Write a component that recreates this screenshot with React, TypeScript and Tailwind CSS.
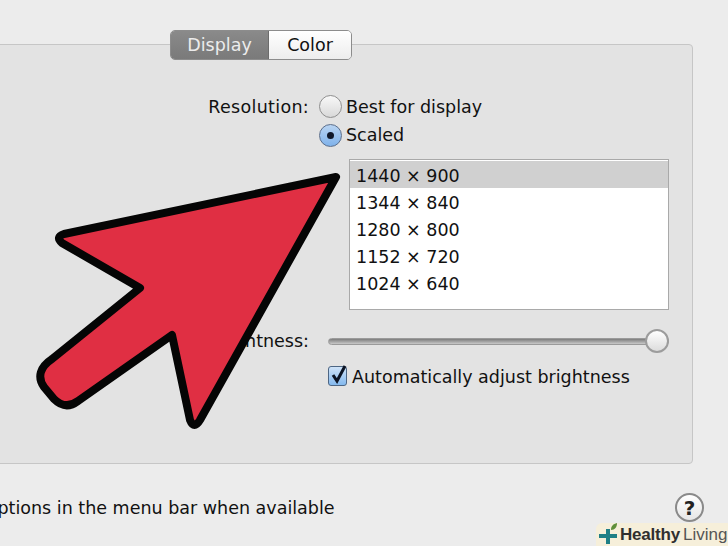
import React from 'react';

const resolutions = ['1440 × 900', '1344 × 840', '1280 × 800', '1152 × 720', '1024 × 640'];

const Radio = ({ checked }: { checked?: boolean }) => (
  <span
    className={`w-[23px] h-[23px] rounded-full flex items-center justify-center border ${
      checked
        ? 'border-[#5c6f8c] bg-gradient-to-b from-[#b9d4f2] to-[#7fb2ea]'
        : 'border-[#8f8f8f] bg-gradient-to-b from-[#f8f8f8] to-[#d9d9d9]'
    }`}
  >
    {checked && <span className="w-[7px] h-[7px] rounded-full bg-[#10182a]" />}
  </span>
);

const Arrow = () => (
  <svg className="absolute left-0 top-0 pointer-events-none" width="728" height="546" viewBox="0 0 728 546">
    <path
      d="M336 177 L64 234 Q55 237 62 243 L140 288 L52 359 C40 367 37 377 44 387 L54 399 C62 407 70 407 78 401 L172 335 L190 420 Q194 430 200 420 Z"
      fill="#e02f43"
      stroke="#050505"
      strokeWidth="8"
      strokeLinejoin="round"
    />
  </svg>
);

const Badge = () => (
  <div className="absolute right-0 bottom-0 w-[132px] h-[23px] bg-[#f6efda] rounded-tl-[6px] flex items-center pl-[2px] text-[17px] leading-[23px] whitespace-nowrap font-['Liberation_Sans',sans-serif]">
    <svg width="21" height="22" viewBox="0 0 21 22" className="shrink-0 -mt-[2px]">
      <path d="M8 6h4v5h7v4h-7v6H8v-6H1v-4h7z" fill="#1f7f86" />
      <path d="M13 7c0-4 2-6 6-7 0 4-2 7-6 7z" fill="#5f8f3a" />
    </svg>
    <span className="ml-[1px] font-bold text-[#2f2f2f] tracking-[-0.2px]">Healthy</span>
    <span className="ml-[3px] text-[#555555]">Living</span>
  </div>
);

export default function App() {
  return (
    <div className="relative w-[728px] h-[546px] overflow-hidden bg-[#ececec] text-[#111111] text-[17.5px] leading-[24px] font-['DejaVu_Sans',sans-serif]">
      <div className="pt-[44px] -ml-[10px]">
        {/* Panel */}
        <div className="w-[703px] h-[420px] bg-[#e3e3e3] border border-[#c6c6c6] rounded-[4px]">
          {/* Tabs */}
          <div className="-mt-[15px] ml-[179px] w-[182px] h-[30px] flex rounded-[5px] border border-[#8c8c8c] overflow-hidden">
            <div className="w-[98px] flex items-center justify-center bg-gradient-to-b from-[#8a8a8a] to-[#7a7a7a] text-[#ececec] border-r border-[#6c6c6c]">
              Display
            </div>
            <div className="flex-1 flex items-center justify-center bg-gradient-to-b from-[#ffffff] to-[#ededed]">
              Color
            </div>
          </div>

          {/* Resolution */}
          <div className="mt-[34px] grid grid-cols-[318px_1fr] gap-y-[5px] items-center">
            <div className="text-right h-[24px] leading-[26px] tracking-[0.3px]">Resolution:</div>
            <div className="flex items-center gap-[4px] pl-[10px]">
              <Radio />
              <span className="h-[24px] leading-[26px]">Best for display</span>
            </div>
            <div />
            <div className="flex items-center gap-[4px] pl-[10px]">
              <Radio checked />
              <span>Scaled</span>
            </div>
          </div>

          {/* List */}
          <div className="mt-[12px] ml-[358px] w-[320px] h-[151px] bg-white border border-[#a9a9a9] pt-[1px]">
            {resolutions.map((r, i) => (
              <div key={r} className={`h-[27px] pl-[6px] leading-[30px] ${i === 0 ? 'bg-[#d0d0d0]' : ''}`}>
                {r}
              </div>
            ))}
          </div>

          {/* Brightness */}
          <div className="mt-[18px] flex items-center">
            <div className="w-[318px] text-right">Brightness:</div>
            <div className="relative ml-[19px] w-[341px] h-[26px] flex items-center">
              <div className="w-full h-[7px] rounded-full bg-gradient-to-b from-[#7d7d7d] to-[#c9c9c9] border border-[#9a9a9a]" />
              <div className="absolute right-0 top-[1px] w-[24px] h-[24px] rounded-full border-2 border-[#9c9c9c] bg-gradient-to-b from-[#ffffff] to-[#dcdcdc]" />
            </div>
          </div>

          {/* Auto brightness */}
          <div className="mt-[8px] ml-[337px] flex items-center gap-[5px]">
            <span className="relative w-[19px] h-[20px] rounded-[3px] border border-[#4d6684] bg-gradient-to-b from-[#cfe3f8] to-[#84b9ee]">
              <svg className="absolute -left-[1px] -top-[4px]" width="22" height="24" viewBox="0 0 22 24">
                <path d="M5 12l4 6 8-15" fill="none" stroke="#0c1424" strokeWidth="3" />
              </svg>
            </span>
            <span className="mt-[3px]">Automatically adjust brightness</span>
          </div>
        </div>

        {/* Footer */}
        <div className="mt-[32px] -ml-[56px] whitespace-nowrap">Show options in the menu bar when available</div>
      </div>

      <div className="absolute left-[675px] top-[493px] w-[29px] h-[29px] rounded-full border-2 border-[#8a8a8a] bg-gradient-to-b from-[#ffffff] to-[#e6e6e6] flex items-center justify-center font-bold text-[20px] text-[#222222]">
        ?
      </div>
      <Badge />
      <Arrow />
    </div>
  );
}
